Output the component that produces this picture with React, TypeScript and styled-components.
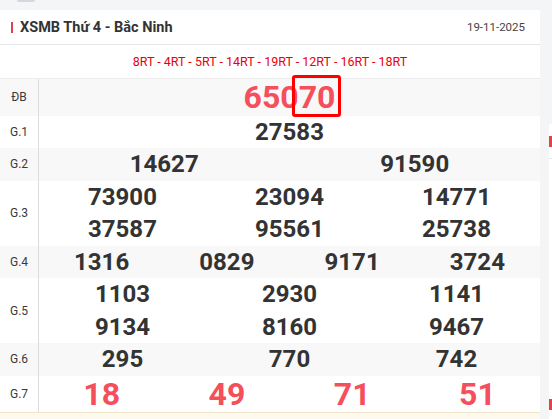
import styled, { createGlobalStyle } from 'styled-components';

const GlobalStyle = createGlobalStyle`
    html, body {
        margin: 0;
        padding: 0;
        background: #f4f5f7;
        overflow: hidden;
    }
    body {
        font-family: Roboto, 'Liberation Sans', Arial, sans-serif;
    }
`;

const Page = styled.div`
    position: relative;
    display: flex;
    gap: 9px;
    width: 552px;
    height: 419px;
    overflow: hidden;
`;

const TopTab = styled.div`
    position: absolute;
    top: 0;
    left: 17px;
    width: 18px;
    height: 2px;
    border-radius: 0 0 2px 2px;
    background: #d6d7da;
`;

const Card = styled.div`
    flex: 0 0 540px;
    margin-top: 10px;
    background: #fff;
`;

const SideCard = styled.div`
    flex: 0 0 200px;
    margin-top: 124px;
    background: #fff;
`;

const SideHead = styled.div`
    height: 34px;
    border-bottom: 1px solid #e6e6e6;
    display: flex;
    align-items: center;
    &::before {
        content: '';
        width: 3px;
        height: 11px;
        background: #e5414b;
    }
`;

const SideBar = styled.div`
    margin-top: 240px;
    width: 3px;
    height: 11px;
    background: #e5414b;
`;

const Header = styled.div`
    display: flex;
    align-items: center;
    justify-content: space-between;
    height: 34px;
    padding: 0 15px 0 11px;
    border-bottom: 1px solid #e6e6e6;
`;

const Title = styled.h2`
    display: flex;
    align-items: center;
    gap: 7px;
    margin: 0;
    font-size: 14.5px;
    font-weight: 700;
    color: #333;
    &::before {
        content: '';
        width: 2px;
        height: 11px;
        background: #e5414b;
    }
`;

const DateText = styled.span`
    font-size: 11.5px;
    color: #444;
`;

const Codes = styled.div`
    height: 33px;
    display: flex;
    align-items: center;
    justify-content: center;
    font-size: 12.5px;
    color: #e8000b;
    border-bottom: 1px solid #ececec;
`;

const Row = styled.div<{ $shade?: boolean }>`
    display: flex;
    background: ${(p) => (p.$shade ? '#f8f8f8' : '#fff')};
`;

const Label = styled.div`
    flex: 0 0 38px;
    display: flex;
    align-items: center;
    justify-content: center;
    font-size: 12px;
    color: #3a3a3a;
    border-right: 1px solid #dcdcdc;
`;

const Values = styled.div<{ $cols: number }>`
    flex: 1;
    display: grid;
    grid-template-columns: repeat(${(p) => p.$cols}, 1fr);
`;

const Num = styled.div<{ $big?: boolean; $red?: boolean }>`
    text-align: center;
    font-weight: 700;
    font-size: ${(p) => (p.$big ? '32px' : '24px')};
    line-height: ${(p) => (p.$big ? '36.5px' : '32.5px')};
    color: ${(p) => (p.$red ? '#f44f5b' : '#333')};
`;

const Marked = styled.span`
    position: relative;
    display: inline-block;
`;

const MarkBox = styled.span`
    position: absolute;
    top: -4px;
    bottom: -1px;
    left: -7px;
    right: -6px;
    border: 3px solid #f00;
    border-radius: 3px;
`;

const Footer = styled.div`
    height: 8px;
    background: #fdf9ee;
    border-top: 1px solid #f2e4c6;
`;

type Prize = { label: string; cols: number; nums: string[]; big?: boolean; red?: boolean };

const prizes: Prize[] = [
    { label: 'G.1', cols: 1, nums: ['27583'] },
    { label: 'G.2', cols: 2, nums: ['14627', '91590'] },
    { label: 'G.3', cols: 3, nums: ['73900', '23094', '14771', '37587', '95561', '25738'] },
    { label: 'G.4', cols: 4, nums: ['1316', '0829', '9171', '3724'] },
    { label: 'G.5', cols: 3, nums: ['1103', '2930', '1141', '9134', '8160', '9467'] },
    { label: 'G.6', cols: 3, nums: ['295', '770', '742'] },
    { label: 'G.7', cols: 4, nums: ['18', '49', '71', '51'], big: true, red: true },
];

export default function App() {
    return (
        <>
            <GlobalStyle />
            <Page>
                <TopTab />
                <Card>
                    <Header>
                        <Title>XSMB Thứ 4 - Bắc Ninh</Title>
                        <DateText>19-11-2025</DateText>
                    </Header>
                    <Codes>8RT - 4RT - 5RT - 14RT - 19RT - 12RT - 16RT - 18RT</Codes>
                    <Row $shade>
                        <Label>ĐB</Label>
                        <Values $cols={1}>
                            <Num $big $red>
                                650
                                <Marked>
                                    70
                                    <MarkBox />
                                </Marked>
                            </Num>
                        </Values>
                    </Row>
                    {prizes.map((p, i) => (
                        <Row key={p.label} $shade={i % 2 === 1}>
                            <Label>{p.label}</Label>
                            <Values $cols={p.cols}>
                                {p.nums.map((n, j) => (
                                    <Num key={j} $big={p.big} $red={p.red}>
                                        {n}
                                    </Num>
                                ))}
                            </Values>
                        </Row>
                    ))}
                    <Footer />
                </Card>
                <SideCard>
                    <SideHead />
                    <SideBar />
                </SideCard>
            </Page>
        </>
    );
}
